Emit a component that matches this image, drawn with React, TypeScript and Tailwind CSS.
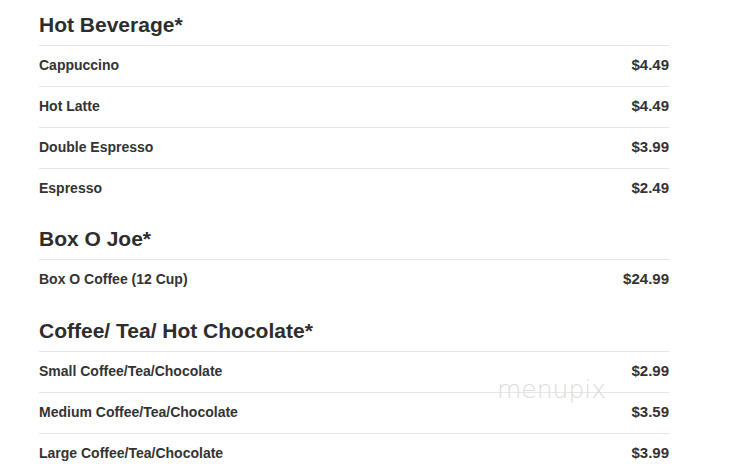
import React from "react";

type Item = { name: string; price: string };
type Section = { title: string; items: Item[]; gap: string };

const sections: Section[] = [
  {
    title: "Hot Beverage*",
    gap: "",
    items: [
      { name: "Cappuccino", price: "$4.49" },
      { name: "Hot Latte", price: "$4.49" },
      { name: "Double Espresso", price: "$3.99" },
      { name: "Espresso", price: "$2.49" },
    ],
  },
  {
    title: "Box O Joe*",
    gap: "mt-[5px]",
    items: [{ name: "Box O Coffee (12 Cup)", price: "$24.99" }],
  },
  {
    title: "Coffee/ Tea/ Hot Chocolate*",
    gap: "mt-[6px]",
    items: [
      { name: "Small Coffee/Tea/Chocolate", price: "$2.99" },
      { name: "Medium Coffee/Tea/Chocolate", price: "$3.59" },
      { name: "Large Coffee/Tea/Chocolate", price: "$3.99" },
    ],
  },
];

export default function App() {
  return (
    <div
      className="relative w-[730px] h-[473px] overflow-hidden bg-white text-[#333333]"
      style={{ fontFamily: '"Liberation Sans", Arial, sans-serif' }}
    >
      <div className="ml-[39px] w-[630px] flex flex-col">
        {sections.map((s) => (
          <div key={s.title} className={s.gap}>
            <div className="h-[46px] pt-[14px] border-b border-[#e6e6e6]">
              <h2 className="text-[21px] leading-[22px] font-bold text-[#2d2d2d]">{s.title}</h2>
            </div>
            {s.items.map((it, ii) => (
              <div
                key={it.name}
                className={
                  "flex items-center justify-between pb-[3px] " +
                  (ii === 0 ? "h-[40px]" : "h-[41px] border-t border-[#e6e6e6]")
                }
              >
                <span className="text-[14px] leading-[16px] font-bold">{it.name}</span>
                <span className="text-[15px] leading-[16px] font-bold">{it.price}</span>
              </div>
            ))}
          </div>
        ))}
      </div>
      <div
        className="absolute left-[497px] top-[376px] text-[25px] leading-[28px] text-[#dcdcdc] select-none"
        style={{ fontFamily: '"DejaVu Sans", sans-serif', fontWeight: 200 }}
      >
        menupix
      </div>
    </div>
  );
}
